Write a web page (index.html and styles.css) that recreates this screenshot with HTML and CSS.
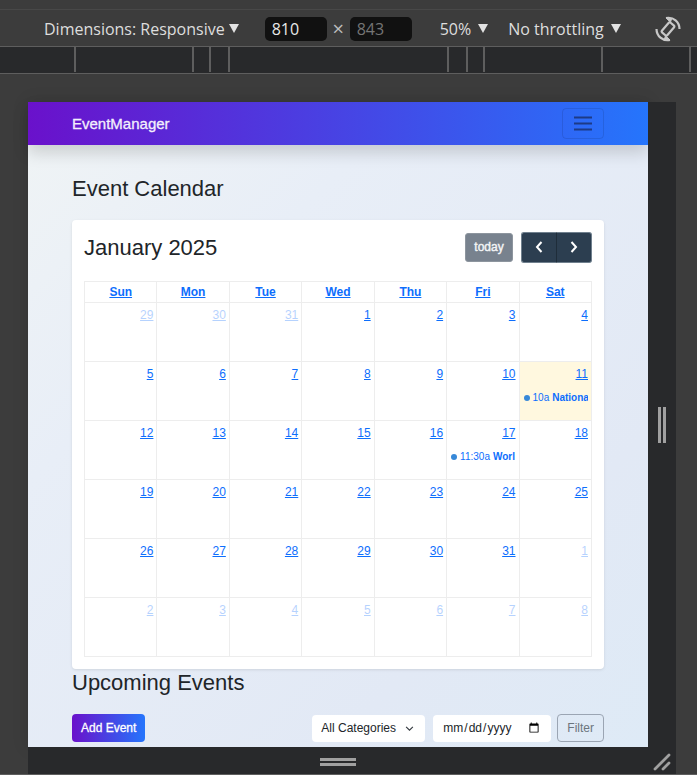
FILE: index.html
```html
<!DOCTYPE html>
<html lang="en">
<head>
<meta charset="utf-8">
<title>EventManager</title>
<link rel="stylesheet" href="styles.css">
</head>
<body>
<header class="toolbar">
  <button class="drop dimensions" type="button">Dimensions: Responsive <span class="caret"></span></button>
  <div class="sizes">
    <input class="size" type="text" value="810" aria-label="Width">
    <span class="times">×</span>
    <input class="size size-muted" type="text" value="843" aria-label="Height">
  </div>
  <button class="drop zoom" type="button">50% <span class="caret"></span></button>
  <button class="drop" type="button">No throttling <span class="caret"></span></button>
  <button class="rotate" type="button" aria-label="Rotate">
    <svg viewBox="0 0 26 26" width="26" height="26" fill="none" stroke="#c7c7c7" stroke-width="2.200">
      <rect x="9.500" y="6.500" width="7" height="13" rx="1.500" transform="rotate(40 13 13)"/>
      <path d="M11 2 C18.500 0.500 24.500 6 24.500 13"/>
      <path d="M11 2 L15.500 6.300 L16.500 3 Z" fill="#c7c7c7" stroke-width="1"/>
      <path d="M15 24 C7.500 25.500 1.500 20 1.500 13"/>
      <path d="M15 24 L10.500 19.700 L9.500 23 Z" fill="#c7c7c7" stroke-width="1"/>
    </svg>
  </button>
</header>
<div class="ruler"><i></i><i></i><i></i><i></i><i></i><i></i><i></i><i></i><i></i></div>

<div class="stage">
  <div class="device">
    <nav class="navbar">
      <a class="brand" href="#">EventManager</a>
      <button class="toggler" type="button" aria-label="Menu">
        <svg viewBox="0 0 20 16" width="20" height="16" stroke="#1d3a86" stroke-width="2"><path d="M1 1.500h18M1 7.500h18M1 13.500h18"/></svg>
      </button>
    </nav>
    <main class="content">
      <h2 class="heading">Event Calendar</h2>
      <section class="card">
        <div class="cal-head">
          <h2 class="heading cal-title">January 2025</h2>
          <button class="today" type="button" disabled>today</button>
          <div class="group">
            <button type="button" aria-label="Previous"><svg viewBox="0 0 12 14" width="12" height="14" fill="none" stroke="#fff" stroke-width="2"><path d="M8.500 2 L4 7 L8.500 12"/></svg></button>
            <button type="button" aria-label="Next"><svg viewBox="0 0 12 14" width="12" height="14" fill="none" stroke="#fff" stroke-width="2"><path d="M3.500 2 L8 7 L3.500 12"/></svg></button>
          </div>
        </div>
        <table class="month">
          <thead><tr><th><a href="#">Sun</a></th><th><a href="#">Mon</a></th><th><a href="#">Tue</a></th><th><a href="#">Wed</a></th><th><a href="#">Thu</a></th><th><a href="#">Fri</a></th><th><a href="#">Sat</a></th></tr></thead>
          <tbody>
            <tr><td class="other"><a href="#">29</a></td><td class="other"><a href="#">30</a></td><td class="other"><a href="#">31</a></td><td><a href="#">1</a></td><td><a href="#">2</a></td><td><a href="#">3</a></td><td><a href="#">4</a></td></tr>
            <tr><td><a href="#">5</a></td><td><a href="#">6</a></td><td><a href="#">7</a></td><td><a href="#">8</a></td><td><a href="#">9</a></td><td><a href="#">10</a></td><td class="now"><a href="#">11</a><div class="event">10a <b>Nationa</b></div></td></tr>
            <tr><td><a href="#">12</a></td><td><a href="#">13</a></td><td><a href="#">14</a></td><td><a href="#">15</a></td><td><a href="#">16</a></td><td><a href="#">17</a><div class="event">11:30a <b>Worl</b></div></td><td><a href="#">18</a></td></tr>
            <tr><td><a href="#">19</a></td><td><a href="#">20</a></td><td><a href="#">21</a></td><td><a href="#">22</a></td><td><a href="#">23</a></td><td><a href="#">24</a></td><td><a href="#">25</a></td></tr>
            <tr><td><a href="#">26</a></td><td><a href="#">27</a></td><td><a href="#">28</a></td><td><a href="#">29</a></td><td><a href="#">30</a></td><td><a href="#">31</a></td><td class="other"><a href="#">1</a></td></tr>
            <tr><td class="other"><a href="#">2</a></td><td class="other"><a href="#">3</a></td><td class="other"><a href="#">4</a></td><td class="other"><a href="#">5</a></td><td class="other"><a href="#">6</a></td><td class="other"><a href="#">7</a></td><td class="other"><a href="#">8</a></td></tr>
          </tbody>
        </table>
      </section>
      <h2 class="heading">Upcoming Events</h2>
      <form class="filters">
        <button class="add" type="button">Add Event</button>
        <select class="field category" aria-label="Category"><option>All Categories</option></select>
        <input class="field date" type="date" aria-label="Date">
        <button class="filter" type="button">Filter</button>
      </form>
    </main>
  </div>
  <div class="grip side"><span class="bars"></span></div>
  <div class="grip bottom"><span class="bars"></span></div>
  <div class="grip corner">
    <svg viewBox="0 0 18 18" width="18" height="18" stroke="#a0a0a0" stroke-width="2.800" stroke-linecap="round"><path d="M2 16 L16 2M10 16 L16 10"/></svg>
  </div>
</div>
</body>
</html>
```
FILE: styles.css
```css
* { box-sizing: border-box; }
body {
  margin: 0;
  background: #3c3c3c;
  font-family: "Liberation Sans", Arial, sans-serif;
  font-size: 12px;
  color: #212529;
}
button, input, select { font: inherit; margin: 0; }

.toolbar {
  display: flex;
  align-items: center;
  height: 47px;
  padding: 11px 16px 0 44px;
  border-bottom: 1px solid #5e5e5e;
  background: linear-gradient(#484848, #484848) 0 9px / 100% 1px no-repeat;
  font: 16px "Open Sans", "Noto Sans", sans-serif;
  color: #dedede;
}
.drop {
  display: flex;
  align-items: center;
  gap: 7px;
  padding: 0;
  border: 0;
  background: none;
  color: inherit;
  white-space: nowrap;
}
.caret {
  border: 5px solid transparent;
  border-top: 9px solid #e3e3e3;
  border-bottom: 0;
}
.dimensions { gap: 4px; margin-right: 26px; }
.zoom { margin: 0 20px 0 28px; }
.sizes { display: flex; align-items: center; }
.size {
  width: 62px;
  height: 24px;
  padding: 0 7px;
  border: 0;
  border-radius: 5px;
  background: #111;
  color: #e8e8e8;
}
.size-muted { color: #757575; }
.times { width: 23px; text-align: center; font-size: 20px; line-height: 24px; color: #bdbdbd; }
.rotate {
  display: flex;
  margin-left: auto;
  padding: 0;
  border: 0;
  background: none;
}

.ruler {
  display: grid;
  grid-template-columns: 76fr 118fr 17fr 19fr 219fr 19fr 17fr 118fr 88fr 6fr;
  height: 27px;
  padding-bottom: 1px;
  border-bottom: 1px solid #5e5e5e;
  background: #28292b;
}
.ruler i { border-right: 2px solid #5e5e5e; }

.stage {
  display: grid;
  grid-template-columns: minmax(0, 1fr) 28px;
  padding: 28px 21px 0 28px;
  border-bottom: 1px solid #5e5e5e;
}
.device {
  background: linear-gradient(135deg, #f0f4f5 0%, #e8eef7 30%, #e2e9f5 75%, #deeaf6 100%);
  box-shadow: 0 0 16px rgba(0, 0, 0, .12);
}
.grip {
  display: flex;
  align-items: center;
  justify-content: center;
  background: #28292b;
}
.bottom, .corner { height: 27px; padding-top: 2px; }
.side .bars {
  width: 8px;
  height: 36px;
  border: solid #a0a0a0;
  border-width: 0 3px;
}
.bottom .bars {
  width: 36px;
  height: 8px;
  border: solid #a0a0a0;
  border-width: 3px 0;
}

.navbar {
  display: flex;
  align-items: center;
  justify-content: space-between;
  height: 43px;
  padding: 0 44px;
  background: linear-gradient(to right, #6a11cb, #2575fc);
  box-shadow: 0 8px 16px rgba(0, 0, 0, .15);
}
.brand {
  font-size: 15px;
  color: #f3effd;
  text-decoration: none;
  -webkit-text-stroke: 0.3px;
}
.toggler {
  display: flex;
  align-items: center;
  justify-content: center;
  width: 42px;
  height: 31px;
  padding: 0;
  border: 1px solid rgba(0, 0, 0, .1);
  border-radius: 4px;
  background: none;
}

.content { padding: 30px 44px 5px; }
.heading {
  margin: 0;
  font-size: 22px;
  line-height: 27px;
  font-weight: 400;
}
.card {
  margin-top: 18px;
  padding: 12px;
  border-radius: 4px;
  background: #fff;
  box-shadow: 0 1px 3px rgba(0, 0, 0, .1);
}
.cal-head {
  display: flex;
  align-items: center;
  gap: 8px;
  height: 30px;
  margin-bottom: 19px;
}
.cal-title { margin-right: auto; }
.today {
  width: 48px;
  height: 29px;
  padding: 0;
  border: 1px solid #8d959e;
  border-radius: 3px;
  background: #78828e;
  color: #f4f5f6;
  -webkit-text-stroke: 0.4px;
}
.group { display: flex; }
.group button {
  display: flex;
  align-items: center;
  justify-content: center;
  width: 36px;
  height: 31px;
  padding: 0;
  border: 1px solid #70808e;
  border-right-color: #1f2d3a;
  border-radius: 3px 0 0 3px;
  background: #2c3e50;
}
.group button + button {
  width: 35px;
  border-left: 0;
  border-right-color: #70808e;
  border-radius: 0 3px 3px 0;
}

.month {
  width: 100%;
  table-layout: fixed;
  border-collapse: collapse;
}
.month th, .month td {
  padding: 0 3px;
  border: 1px solid #ededed;
}
.month th { height: 21px; line-height: 18px; }
.month td {
  height: 59px;
  padding-top: 4px;
  vertical-align: top;
  text-align: right;
  line-height: 16px;
}
.month a { color: #0d6efd; text-underline-offset: 1px; }
.month .other a { opacity: .3; }
.month .now { background: #fff8df; }
.event {
  display: flex;
  align-items: center;
  gap: 3px;
  margin-top: 8px;
  padding-left: 1px;
  overflow: hidden;
  white-space: nowrap;
  font-size: 10px;
  color: #0d6efd;
}
.event::before {
  content: "";
  flex: none;
  width: 6px;
  height: 6px;
  border-radius: 50%;
  background: #3788d8;
}

.filters {
  display: flex;
  align-items: center;
  margin-top: 18px;
}
.add, .filter {
  height: 28px;
  padding: 0 9px;
  border: 0;
  border-radius: 4px;
  white-space: nowrap;
}
.add {
  margin-right: auto;
  background: linear-gradient(to right, #6a11cb, #2575fc);
  color: #fff;
  -webkit-text-stroke: 0.3px;
}
.filter {
  border: 1px solid #9ba5b3;
  background: none;
  color: #6c757d;
}
.field {
  height: 27px;
  border: 0;
  border-radius: 4px;
  background: #fff;
  color: #212529;
}
.category {
  width: 113px;
  margin-right: 8px;
  padding: 0 9px;
  appearance: none;
  background: #fff url("data:image/svg+xml,%3Csvg xmlns='http://www.w3.org/2000/svg' viewBox='0 0 16 16'%3E%3Cpath fill='none' stroke='%23343a40' stroke-width='2' d='m2 5 6 6 6-6'/%3E%3C/svg%3E") right 11px center / 9px 9px no-repeat;
}
.date { width: 118px; margin-right: 6px; padding: 0 9px; }
```
